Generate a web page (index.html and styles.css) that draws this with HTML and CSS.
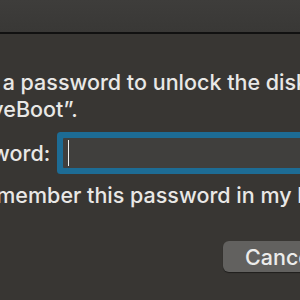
FILE: index.html
```html
<!DOCTYPE html>
<html lang="en">
<head>
    <meta charset="UTF-8">
    <meta name="viewport" content="width=device-width, initial-scale=1.0">
    <title>Unlock Disk</title>
    <link rel="stylesheet" href="styles.css">
</head>
<body>
    <!-- Alert window -->
    <div class="dialog">
        <div class="titlebar"></div>

        <div class="content">
            <p class="message">Enter a password to unlock the disk “ActiveBoot”.</p>

            <form class="fields" onsubmit="return false">
                <label class="field-label" for="pw">Password:</label>
                <div class="field-wrap">
                    <input class="field" type="password" id="pw">
                    <span class="caret"></span>
                </div>
            </form>

            <label class="remember">
                <span class="checkbox"></span>
                <span>Remember this password in my keychain</span>
            </label>

            <div class="actions">
                <button type="button" class="btn">Cancel</button>
                <button type="button" class="btn btn-default">Unlock</button>
            </div>
        </div>
    </div>
</body>
</html>
```

FILE: styles.css
```css
/* General */
html, body {
    margin: 0;
    padding: 0;
    overflow: hidden;
}

body {
    width: 300px;
    height: 300px;
    background-color: #383633;
    font-family: Inter, "Noto Sans", sans-serif;
    color: #e9e8e6;
}

/* Window */
.dialog {
    margin-left: -57px;
    width: 560px;
}

.titlebar {
    height: 32px;
    background: linear-gradient(#3e3d3b, #393836);
    border-bottom: 2px solid #111;
}

.content {
    padding-top: 35px;
}

/* Message */
.message {
    width: 385px;
    margin: 0;
    font-size: 21.5px;
    font-weight: 500;
    line-height: 27px;
}

/* Password row */
.fields {
    display: grid;
    grid-template-columns: 103px 1fr;
    column-gap: 17px;
    align-items: center;
    margin: 0;
    margin-top: 15px;
}

.field-label {
    text-align: right;
    font-size: 21.5px;
    font-weight: 500;
}

.field-wrap {
    position: relative;
}

.field {
    display: block;
    box-sizing: border-box;
    width: 420px;
    height: 30px;
    border: none;
    border-radius: 1px;
    background-color: #403f3d;
    box-shadow: 0 0 0 6px #1d6c95;
    outline: none;
}

.caret {
    position: absolute;
    left: 5px;
    top: 2px;
    width: 1px;
    height: 26px;
    background-color: #f2f2f2;
}

/* Checkbox */
.remember {
    display: flex;
    align-items: center;
    gap: 7px;
    margin-top: 14px;
    font-size: 21.5px;
    font-weight: 500;
    line-height: 27px;
}

.checkbox {
    width: 20px;
    height: 20px;
    border-radius: 4px;
    background-color: #5f5e5c;
}

/* Buttons */
.actions {
    display: flex;
    gap: 14px;
    margin-top: 32px;
    padding-left: 280px;
}

.btn {
    height: 31px;
    padding: 0 22px;
    border: none;
    border-radius: 6px;
    background-color: #62615f;
    color: #ececeb;
    font-family: Inter, "Noto Sans", sans-serif;
    font-size: 21.5px;
    font-weight: 500;
    box-shadow: 0 1px 1px rgba(0, 0, 0, 0.45);
}

.btn-default {
    background-color: #1d6c95;
}
```
